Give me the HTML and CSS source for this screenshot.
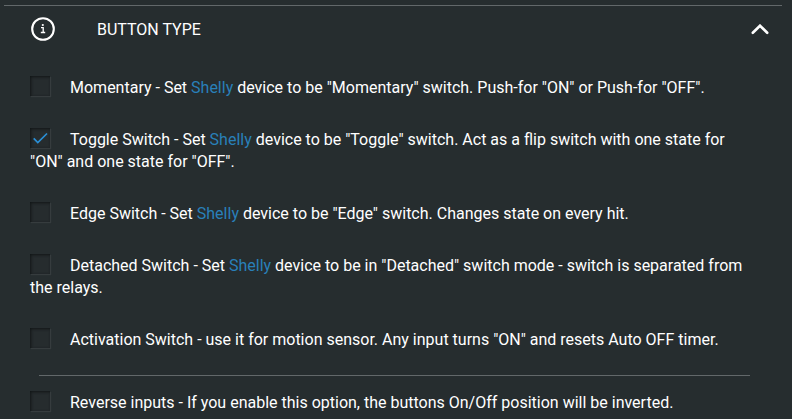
FILE: index.html
```html
<!DOCTYPE html>
<html lang="en">
<head>
    <meta charset="UTF-8">
    <meta name="viewport" content="width=device-width, initial-scale=1.0">
    <title>Button Type</title>
    <link rel="stylesheet" href="styles.css">
</head>
<body>
    <div class="panel">
        <div class="panel-header">
            <svg class="info-icon" viewBox="0 0 24 24" width="24" height="24">
                <circle cx="12" cy="11" r="10.8" fill="none" stroke="#fff" stroke-width="2.1"/>
                <circle cx="11.8" cy="7" r="1.1" fill="#fff"/>
                <path d="M10 9.6h2.2v4.7M9.8 14.5h4.4" fill="none" stroke="#fff" stroke-width="1.3"/>
            </svg>
            <h2>BUTTON TYPE</h2>
            <svg class="chevron" viewBox="0 0 18 12" width="18" height="12">
                <path d="M1.8 8.8L9 1.7l7.2 7.1" fill="none" stroke="#fff" stroke-width="2.6" stroke-linecap="round"/>
            </svg>
        </div>

        <div class="options">
            <label class="option"><span class="box"></span>Momentary - Set <a>Shelly</a> device to be "Momentary" switch. Push-for "ON" or Push-for "OFF".</label>
            <label class="option"><span class="box"><svg viewBox="0 0 20 20" width="20" height="20"><path d="M3.7 10.3l4.1 4.2 9.2-9" fill="none" stroke="#2a8fd6" stroke-width="1.7"/></svg></span>Toggle Switch - Set <a>Shelly</a> device to be "Toggle" switch. Act as a flip switch with one state for "ON" and one state for "OFF".</label>
            <label class="option"><span class="box"></span>Edge Switch - Set <a>Shelly</a> device to be "Edge" switch. Changes state on every hit.</label>
            <label class="option"><span class="box"></span>Detached Switch - Set <a>Shelly</a> device to be in "Detached" switch mode - switch is separated from the relays.</label>
            <label class="option"><span class="box"></span>Activation Switch - use it for motion sensor. Any input turns "ON" and resets Auto OFF timer.</label>
            <hr>
            <label class="option"><span class="box"></span>Reverse inputs - If you enable this option, the buttons On/Off position will be inverted.</label>
        </div>
    </div>
</body>
</html>
```
FILE: styles.css
```css
body {
    margin: 0;
    background: #262d2f;
    color: #fff;
    font-family: Roboto, sans-serif;
    font-size: 16px;
    line-height: 22px;
    overflow: hidden;
}

.panel {
    margin: 5px 10px 0 4px;
    border-top: 1px solid #62686a;
}

.panel-header {
    display: flex;
    align-items: center;
    height: 47px;
    padding: 0 13px 0 27px;
}

.panel-header h2 {
    flex: 1;
    margin: 0 0 0 42px;
    padding-top: 1px;
    font-size: 16px;
    font-weight: 400;
}

.info-icon {
    overflow: visible;
}

.options {
    padding: 24px 26px 0;
}

.option {
    display: block;
    margin-bottom: 30px;
}

.option:last-child {
    margin-bottom: 0;
}

.option a {
    color: #2980b9;
}

.box {
    display: inline-block;
    width: 20px;
    height: 20px;
    margin: -4px 20px -4px 0;
    vertical-align: 1px;
    background: #262c2e;
    box-shadow: inset 1px 1px 3px #111516, 1px 1px 1px #363c3e;
}

.box svg {
    display: block;
}

hr {
    height: 1px;
    margin: -6px 6px 16px 9px;
    border: 0;
    background: #62686a;
}
```
